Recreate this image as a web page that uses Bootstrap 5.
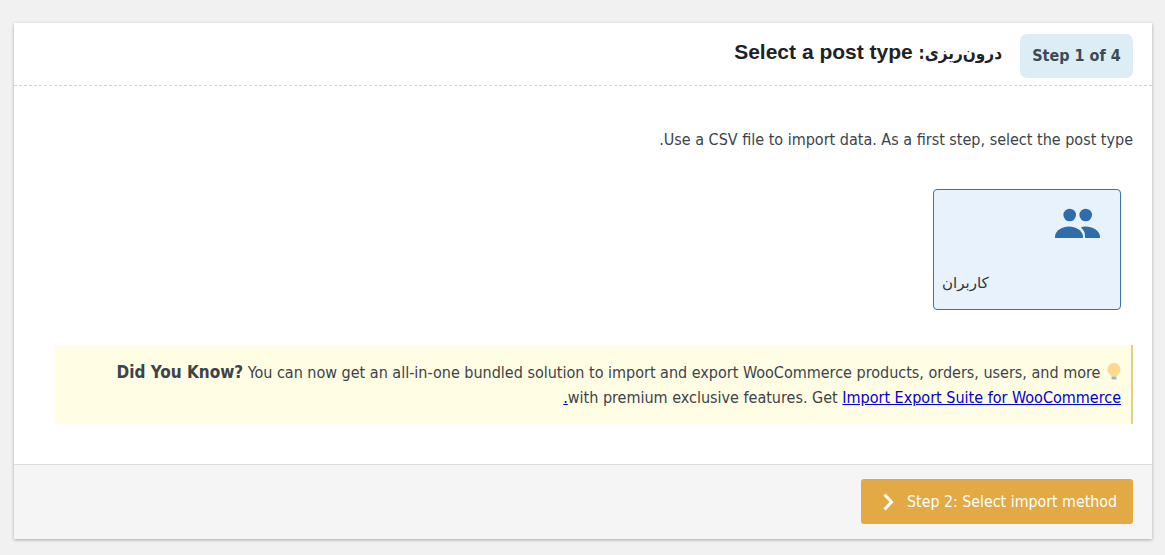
<!DOCTYPE html>
<html lang="fa" dir="rtl">
<head>
  <meta charset="UTF-8">
  <title>درون‌ریزی</title>
  <link href="https://cdn.jsdelivr.net/npm/bootstrap@5.3.0/dist/css/bootstrap.min.css" rel="stylesheet">
  <style>
    body { background-color: #f1f1f1; padding: 23px 13px 0 13px; min-height: 100vh; overflow: hidden; font-family: "DejaVu Sans", sans-serif; font-stretch: condensed; color: #3c434a; }
    .wizard-box { height: 516px; border: 0; border-radius: 0; box-shadow: 0 1px 3px rgba(0,0,0,.3); margin-left: 1px; }
    .wizard-head { height: 63px; padding: 11px 19px 0 19px; border-bottom: 1px dashed #d3d3d3; background: #fff; }
    .step-pill { width: 113px; height: 44px; padding-bottom: 2px; background-color: #dcedf5; border-radius: 7px; font: bold condensed 16px "DejaVu Sans", sans-serif; color: #3c4a54; }
    .wizard-title { font: bold 21px/1 "Liberation Sans", "DejaVu Sans", sans-serif; color: #1d2327; margin: 0 18px 0 0; padding-top: 7px; }
    .title-fa { font: bold condensed 17px/1 "DejaVu Sans", sans-serif; }
    .intro-text { font-size: 16px; line-height: 20px; padding: 44px 19px 0 19px; margin: 0 0 -1px 0; }
    .type-tile { width: 188px; height: 121px; margin: 40px 31px 0 0; background-color: #e8f2fc; border: 1px solid #3a74a8; border-radius: 4px; padding: 18px 20px 0 8px; }
    .type-label { font: 15px "Liberation Sans", "DejaVu Sans", sans-serif; color: #333; margin-top: 35px; text-align: left; }
    .tip-box { height: 79px; margin: 35px 19px 0 41px; padding: 15px 10px 0 10px; background-color: #fffde3; border-right: 2px solid #e5cf85; font-size: 16px; line-height: 25px; }
    .tip-box a { color: #0000d8; }
    .tip-box strong { font-size: 17px; }
    .wizard-foot { height: 75px; padding: 14px 19px 0 19px; background-color: #f5f5f5; border-top: 1px solid #ddd; }
    .next-btn { width: 272px; height: 45px; background-color: #e2a945; border: 0; border-radius: 3px; color: #fff; font-size: 15.800px; font-stretch: condensed; padding: 1px 16px 0 21px; }
    .bulb-icon { vertical-align: -2px; margin-left: 2px; }
  </style>
</head>
<body>
  <div class="card wizard-box">
    <div class="wizard-head d-flex align-items-start">
      <div class="step-pill d-flex align-items-center justify-content-center"><bdi>Step 1 of 4</bdi></div>
      <h2 class="wizard-title"><span class="title-fa">درون‌ریزی:</span> Select a post type</h2>
    </div>

    <div class="flex-grow-1">
      <p class="intro-text">Use a CSV file to import data. As a first step, select the post type.</p>

      <div class="type-tile">
        <svg class="d-block" width="46" height="31" viewBox="0 0 46 31" fill="#2f6cab">
          <circle cx="15.700" cy="7" r="6.300"/>
          <circle cx="31.700" cy="7" r="6.300"/>
          <path d="M1 30v-2c1-6 7.500-9.500 14-9.500s13 3.500 14 9.500v2z"/>
          <path d="M31 30v-3c0-2.500-1.500-5-4-7.500 1.500-.7 3-1 5-1 6 0 13 3.500 14 9.500v2z"/>
        </svg>
        <div class="type-label">کاربران</div>
      </div>

      <div class="tip-box">
        <svg width="14" height="17" viewBox="0 0 14 17" class="bulb-icon">
          <path d="M7 0a6.500 6.500 0 0 0-4 11.600c.6.6 1 1.200 1 1.900h6c0-.7.400-1.300 1-1.900A6.500 6.500 0 0 0 7 0z" fill="#fcd98f"/>
          <rect x="4.500" y="13.500" width="5" height="3" rx="1" fill="#a9b4bb"/>
        </svg>
        <strong>Did You Know?</strong> You can now get an all-in-one bundled solution to import and export WooCommerce products, orders, users, and more<br>with premium exclusive features. Get <a href="#">Import Export Suite for WooCommerce</a><a href="#">.</a>
      </div>
    </div>

    <div class="wizard-foot d-flex">
      <button type="button" class="btn next-btn d-flex align-items-center justify-content-between">
        <span>Step 2: Select import method</span>
        <svg width="12" height="18" viewBox="0 0 12 18"><path d="M2.500 1.500 9.500 9l-7 7.500" fill="none" stroke="#fff" stroke-width="3"/></svg>
      </button>
    </div>
  </div>
  <script src="https://cdn.jsdelivr.net/npm/bootstrap@5.3.0/dist/js/bootstrap.bundle.min.js"></script>
</body>
</html>
